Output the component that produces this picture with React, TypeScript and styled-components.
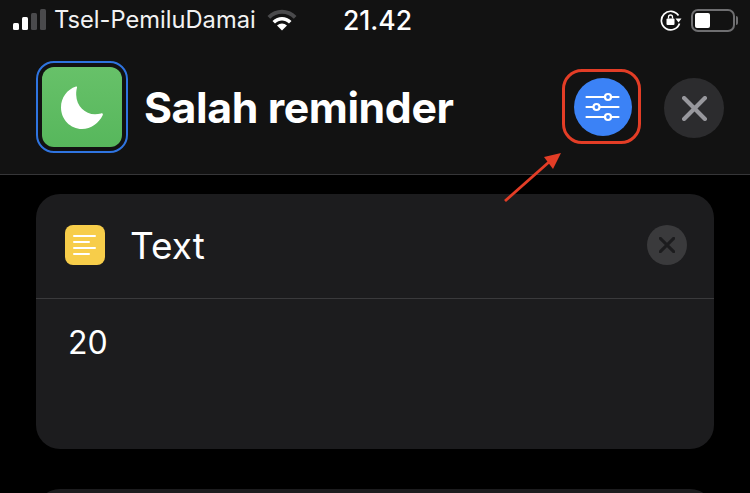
import styled, { createGlobalStyle } from 'styled-components'

/*
 * Styles
 */

const GlobalStyle = createGlobalStyle`
    html, body {
        margin: 0;
        padding: 0;
        background: #000;
    }
`

const Page = styled.div`
    width: 750px;
    height: 493px;
    overflow: hidden;
    position: relative;
    background: #000;
    font-family: Inter, "Liberation Sans", sans-serif;
    color: #fff;
`

const TopArea = styled.div`
    background: #121212;
    border-bottom: 1px solid #363638;
    height: 175px;
    box-sizing: border-box;
    display: flex;
    flex-direction: column;
`

const StatusBar = styled.div`
    height: 40px;
    padding: 0 13px;
    display: flex;
    align-items: center;
`

const Signal = styled.div`
    display: flex;
    align-items: flex-end;
    gap: 3px;
    height: 21px;
    margin: -1px 8px 0 0;
`

const SignalBar = styled.div<{ $height: number; $on: boolean }>`
    width: 6px;
    height: ${p => p.$height}px;
    border-radius: 1.5px;
    background: ${p => (p.$on ? '#fff' : '#4a4a4c')};
`

const Carrier = styled.span`
    font-size: 23.7px;
    font-weight: 400;
    color: #f2f2f2;
    width: 213px;
    white-space: nowrap;
    margin-top: -1px;
`

const Time = styled.span`
    font-size: 26.5px;
    font-weight: 500;
    margin: -1px 0 0 46px;
`

const StatusRight = styled.div`
    margin-left: auto;
    display: flex;
    align-items: center;
    gap: 9px;
    padding-right: 2px;
`

const Battery = styled.div`
    width: 44px;
    height: 23px;
    box-sizing: border-box;
    border: 2px solid #6e6e70;
    border-radius: 7px;
    padding: 2px;
    position: relative;

    &::after {
        content: '';
        position: absolute;
        right: -5px;
        top: 5px;
        width: 2px;
        height: 9px;
        border-radius: 0 2px 2px 0;
        background: #6e6e70;
    }
`

const BatteryLevel = styled.div`
    width: 15px;
    height: 100%;
    background: #fff;
    border-radius: 2px;
`

const Header = styled.div`
    flex: 1;
    padding: 21px 26px 0 36px;
    display: flex;
    align-items: flex-start;
`

const IconFrame = styled.div`
    width: 92px;
    height: 92px;
    box-sizing: border-box;
    border: 2px solid #2f74e0;
    border-radius: 18px;
    display: flex;
    align-items: center;
    justify-content: center;
`

const AppIcon = styled.div`
    width: 80px;
    height: 80px;
    border-radius: 12px;
    background: linear-gradient(#67c169, #57b75c);
    display: flex;
    align-items: center;
    justify-content: center;
`

const Title = styled.h1`
    margin: 19px 0 0 16px;
    font-size: 42.8px;
    line-height: 56px;
    font-weight: 700;
    letter-spacing: -0.4px;
    flex: 1;
    white-space: nowrap;
`

const Actions = styled.div`
    display: flex;
    align-items: flex-start;
    gap: 32px;
    margin-top: 17px;
`

const SettingsButton = styled.div`
    width: 58px;
    height: 58px;
    border-radius: 50%;
    background: #3b82f6;
    display: flex;
    align-items: center;
    justify-content: center;
    position: relative;
`

const Highlight = styled.div`
    position: absolute;
    left: -12px;
    top: -9px;
    width: 79px;
    height: 75px;
    box-sizing: border-box;
    border: 3px solid #e33d26;
    border-radius: 20px;
`

const CloseButton = styled.div`
    width: 60px;
    height: 60px;
    border-radius: 50%;
    background: #2c2c2e;
    display: flex;
    align-items: center;
    justify-content: center;
`

const Arrow = styled.svg`
    position: absolute;
    left: 500px;
    top: 150px;
`

const Content = styled.div`
    padding: 19px 36px 0;
    display: flex;
    flex-direction: column;
    gap: 40px;
`

const Card = styled.div`
    height: 255px;
    flex-shrink: 0;
    border-radius: 24px;
    background: #1c1c1e;
`

const CardHeader = styled.div`
    height: 105px;
    box-sizing: border-box;
    padding: 0 27px 3px 29px;
    border-bottom: 1px solid #3a3a3c;
    display: flex;
    align-items: center;
`

const CardIcon = styled.div`
    width: 40px;
    height: 40px;
    border-radius: 8px;
    background: #f7cd4a;
    display: flex;
    align-items: center;
    justify-content: center;
`

const CardTitle = styled.span`
    margin: 2px 0 0 25px;
    font-size: 37px;
    font-weight: 400;
    flex: 1;
`

const RemoveButton = styled.div`
    width: 40px;
    height: 40px;
    border-radius: 50%;
    background: #3a3a3c;
    display: flex;
    align-items: center;
    justify-content: center;
`

const CardBody = styled.div`
    padding: 24px 32px;
    font-size: 32px;
    line-height: 40px;
    font-weight: 400;
`

/*
 * Icons
 */

const MoonIcon = () => (
    <svg width="42" height="43" viewBox="0 0 42 43">
        <path
            d="M15 0.5 C6 3.500 0 11.500 0 21.500 C0 33.500 9.500 43 21 43 C30 43 38 37 41.800 29 C42.200 27.800 41 27 40 27.500 C38 28 36 28.300 34 28.300 C24 28.300 15.500 20 15.200 9 C15.100 6 15.500 3.500 16 1.500 C16.200 0.500 15.800 0.200 15 0.500 Z"
            fill="#fff"
        />
    </svg>
)

const SlidersIcon = () => (
    <svg width="36" height="32" viewBox="0 0 36 32" fill="none" stroke="#fff" strokeWidth="2.2" strokeLinecap="round">
        <path d="M1.5 6H33.5M1.5 16H33.5M1.5 26H33.5" />
        <circle cx="23" cy="6" r="3" fill="#3b82f6" />
        <circle cx="11.5" cy="16" r="3" fill="#3b82f6" />
        <circle cx="23" cy="26" r="3" fill="#3b82f6" />
    </svg>
)

const CrossIcon = ({ size, color, weight }: { size: number; color: string; weight: number }) => (
    <svg width={size} height={size} viewBox="0 0 24 24" fill="none" stroke={color} strokeWidth={weight} strokeLinecap="round">
        <path d="M2 2L22 22M22 2L2 22" />
    </svg>
)

const TextLinesIcon = () => (
    <svg width="24" height="24" viewBox="0 0 24 24" fill="none" stroke="#fff" strokeWidth="2" strokeLinecap="round">
        <path d="M1 3H22M1 9H16M1 15H22M1 21H16" />
    </svg>
)

const WifiIcon = () => (
    <svg width="30" height="22" viewBox="0 0 30 22">
        <path d="M0.5 7 C8.500 -1.500 21.500 -1.500 29.500 7 L26.800 9.800 C20 3 10 3 3.200 9.800 Z" fill="#4a4a4c" />
        <path d="M5.500 12 C11 6.500 19 6.500 24.500 12 L22 14.600 C17.800 10.600 12.200 10.600 8 14.600 Z" fill="#fff" />
        <path d="M10 16.600 C13 13.800 17 13.800 20 16.600 L15 21.500 Z" fill="#fff" />
    </svg>
)

const RotationLockIcon = () => (
    <svg width="22" height="22" viewBox="0 0 22 22" fill="none">
        <path d="M18.500 6.500 A9.300 9.300 0 1 0 19.500 14.500" stroke="#fff" strokeWidth="1.700" />
        <path d="M15.500 9.500 L21.500 9.500 L18.500 13.500 Z" fill="#fff" />
        <rect x="6.500" y="9.500" width="8" height="6.500" rx="1" fill="#fff" />
        <path d="M8.500 9.500V8A2 2 0 0 1 12.500 8V9.500" stroke="#fff" strokeWidth="1.300" />
    </svg>
)

/*
 * App
 */

const signalBars = [
    { height: 7, on: true },
    { height: 13, on: true },
    { height: 17, on: false },
    { height: 21, on: false },
]

const App = () => {
    return (
        <Page>
            <GlobalStyle />
            <TopArea>
                <StatusBar>
                    <Signal>
                        {signalBars.map((bar, index) => {
                            return <SignalBar $height={bar.height} $on={bar.on} key={index} />
                        })}
                    </Signal>
                    <Carrier>Tsel-PemiluDamai</Carrier>
                    <WifiIcon />
                    <Time>21.42</Time>
                    <StatusRight>
                        <RotationLockIcon />
                        <Battery>
                            <BatteryLevel />
                        </Battery>
                    </StatusRight>
                </StatusBar>
                <Header>
                    <IconFrame>
                        <AppIcon>
                            <MoonIcon />
                        </AppIcon>
                    </IconFrame>
                    <Title>Salah reminder</Title>
                    <Actions>
                        <SettingsButton>
                            <Highlight />
                            <SlidersIcon />
                        </SettingsButton>
                        <CloseButton>
                            <CrossIcon size={25} color="#98989d" weight={4} />
                        </CloseButton>
                    </Actions>
                </Header>
            </TopArea>
            <Arrow width="70" height="60" viewBox="0 0 70 60">
                <path d="M5 51L49 12" stroke="#e33d26" strokeWidth="2.8" />
                <path d="M61 3L44 7L53 19Z" fill="#e33d26" />
            </Arrow>
            <Content>
                <Card>
                    <CardHeader>
                        <CardIcon>
                            <TextLinesIcon />
                        </CardIcon>
                        <CardTitle>Text</CardTitle>
                        <RemoveButton>
                            <CrossIcon size={16} color="#1c1c1e" weight={4.5} />
                        </RemoveButton>
                    </CardHeader>
                    <CardBody>20</CardBody>
                </Card>
                <Card />
            </Content>
        </Page>
    )
}

export default App
